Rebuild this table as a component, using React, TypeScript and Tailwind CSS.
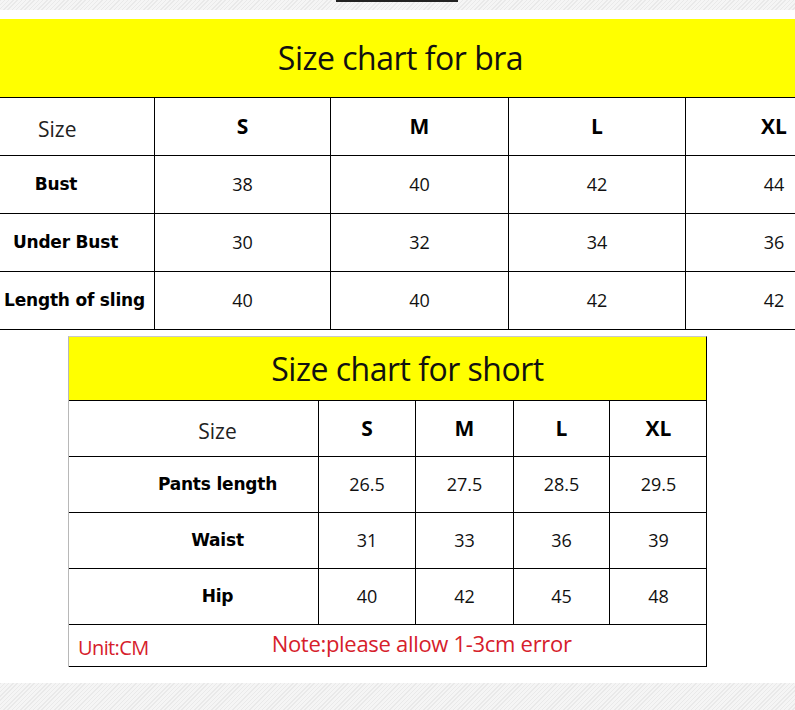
import React from "react";

const hatch =
  "bg-[repeating-linear-gradient(135deg,#e9e9e9_0px,#e9e9e9_1px,#f5f5f5_1px,#f5f5f5_3px)]";

const braSizes = ["S", "M", "L", "XL"];
// labels in the bra chart sit a bit left of centre, each by its own amount
const braRows = [
  { label: "Bust", pad: "pr-[42px]", values: ["38", "40", "42", "44"] },
  { label: "Under Bust", pad: "pr-[23px]", values: ["30", "32", "34", "36"] },
  { label: "Length of sling", pad: "pr-[5px]", values: ["40", "40", "42", "42"] },
];

const shortRows = [
  { label: "Pants length", values: ["26.5", "27.5", "28.5", "29.5"] },
  { label: "Waist", values: ["31", "33", "36", "39"] },
  { label: "Hip", values: ["40", "42", "45", "48"] },
];

const labelFont = "font-['DejaVu_Sans',sans-serif] font-bold text-[17px] tracking-[-0.2px] text-black";
const numFont = "font-['Open_Sans',sans-serif] text-[18px] text-[#111]";
const headFont = "font-['Open_Sans',sans-serif] font-bold text-[21px] text-black";

function BraTable() {
  return (
    <div className="w-[863px]">
      <div className="h-[78px] bg-[#ffff00] flex items-center justify-center pr-[62px]">
        <h1 className="font-['Open_Sans',sans-serif] text-[32px] text-[#111] tracking-[-0.5px]">
          Size chart for bra
        </h1>
      </div>
      <div className="border-t border-black">
        <div className="grid grid-cols-[155px_176px_178px_177px_177px] h-[58px] border-b border-black">
          <div className="border-r border-black flex items-center pl-[38px] pt-[6px] font-['Open_Sans',sans-serif] text-[21px] text-[#222]">
            Size
          </div>
          {braSizes.map((s) => (
            <div key={s} className={`border-r border-black flex items-center justify-center ${headFont}`}>
              {s}
            </div>
          ))}
        </div>
        {braRows.map((r) => (
          <div
            key={r.label}
            className="grid grid-cols-[155px_176px_178px_177px_177px] h-[58px] border-b border-black"
          >
            <div className={`border-r border-black flex items-center justify-center ${r.pad} ${labelFont}`}>
              {r.label}
            </div>
            {r.values.map((v, i) => (
              <div key={i} className={`border-r border-black flex items-center justify-center ${numFont}`}>
                {v}
              </div>
            ))}
          </div>
        ))}
      </div>
    </div>
  );
}

function ShortTable() {
  return (
    <div className="ml-[68px] w-[639px] border-l border-t border-l-[#b8b8b8] border-t-[#c8c8c8] border-r border-r-black">
      <div className="h-[64px] bg-[#ffff00] border-b border-black flex items-center justify-center pl-[40px]">
        <h2 className="font-['Open_Sans',sans-serif] text-[32px] text-[#111] tracking-[-0.5px]">
          Size chart for short
        </h2>
      </div>
      <div className="grid grid-cols-[250px_97px_98px_96px_97px] h-[56px] border-b border-black">
        <div className="border-r border-black flex items-center justify-center pl-[48px] pt-[6px] font-['Open_Sans',sans-serif] text-[21px] text-[#222]">
          Size
        </div>
        {braSizes.map((s, i) => (
          <div
            key={s}
            className={`${i < 3 ? "border-r border-black" : ""} flex items-center justify-center ${headFont}`}
          >
            {s}
          </div>
        ))}
      </div>
      {shortRows.map((r) => (
        <div
          key={r.label}
          className="grid grid-cols-[250px_97px_98px_96px_97px] h-[56px] border-b border-black"
        >
          <div className={`border-r border-black flex items-center justify-center pl-[48px] ${labelFont}`}>
            {r.label}
          </div>
          {r.values.map((v, i) => (
            <div
              key={i}
              className={`${i < 3 ? "border-r border-black" : ""} flex items-center justify-center ${numFont}`}
            >
              {v}
            </div>
          ))}
        </div>
      ))}
      <div className="h-[42px] border-b border-black flex items-center font-['Open_Sans',sans-serif] text-[#d6202b]">
        <span className="pl-[9px] pt-[5px] text-[20px] tracking-[-0.6px]">Unit:CM</span>
        <span className="ml-[123px] pb-[4px] text-[22px] tracking-[-0.3px]">
          Note:please allow 1-3cm error
        </span>
      </div>
    </div>
  );
}

export default function App() {
  return (
    <main className="w-[795px] h-[710px] overflow-hidden bg-white flex flex-col">
      <div className={`h-[10px] ${hatch} flex justify-center`}>
        <div className="w-[122px] h-[2px] bg-[#222] ml-[-2px]" />
      </div>
      <div className="h-[9px]" />
      <BraTable />
      <div className="h-[6px]" />
      <ShortTable />
      <div className="flex-1" />
      <div className={`h-[27px] ${hatch}`} />
    </main>
  );
}
